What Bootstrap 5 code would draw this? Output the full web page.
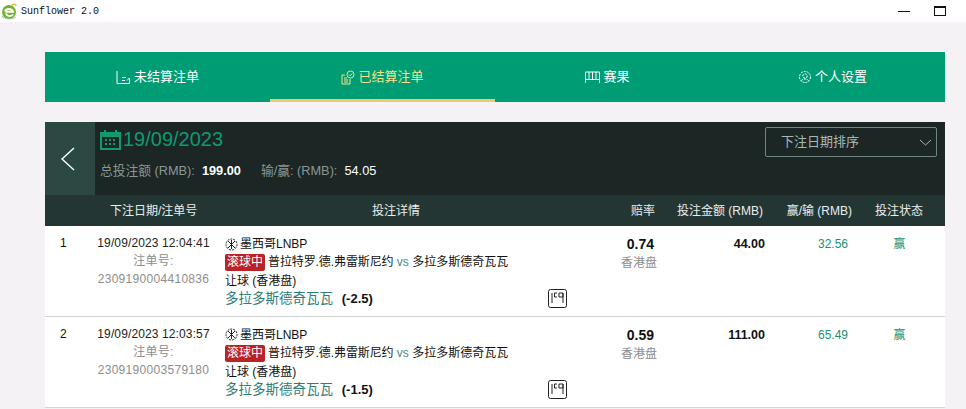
<!DOCTYPE html>
<html lang="zh">
<head>
<meta charset="utf-8">
<title>Sunflower 2.0</title>
<link rel="stylesheet" href="https://cdn.jsdelivr.net/npm/bootstrap@5.3.0/dist/css/bootstrap.min.css">
<style>
html,body{height:100%;overflow:hidden}
body{background:#f5f2f6;font-family:"Liberation Sans","Noto Sans CJK SC",sans-serif;font-size:12px;color:#111}
.win-bar{height:22px;background:#fff;padding-left:1px}
.win-title{font-family:"Liberation Mono",monospace;font-size:10px;color:#111;margin-left:4px}
.win-ctl{margin-right:20px;gap:24px}
.win-min{width:12px;height:1px;background:#111}
.win-max{width:12px;height:10px;border:1px solid #111;border-top-width:2px}
.page-wrap{margin:30px 21px 0 45px}
.tab-bar{background:#009c73;height:50px}
.tab-bar .nav-link{height:50px;display:flex;align-items:center;justify-content:center;gap:3px;color:#fff;font-size:13px;padding:0}
.tab-bar .nav-link.active{color:#f3e28c;border-bottom:3px solid #f1c96a;padding-top:3px}
.panel-top{margin-top:20px;background:#1b2625;height:73px}
.back-box{width:50px;background:#2b4842;padding-right:4px}
.summary{padding:4px 0 0 5px}
.date-big{font-size:20px;line-height:26px;color:#0f9a6f;gap:2px}
.sum-line{margin-top:11px;color:#8b9794;line-height:16px;gap:20px;font-size:12.75px}
.sum-line b,.sum-line em{color:#fff;font-style:normal;margin-left:7px}
.sort-box{width:172px;height:30px;margin:5px 8px 0 0;border:1px solid #6f8782;border-radius:2px;color:#aab6b3;padding:0 4px 0 15px;font-size:13px}
.bet-table{table-layout:fixed;width:900px;margin:0;--bs-table-bg:#fff;--bs-table-color:#111}
.bet-table th{background:#243634;color:#e8eeec;font-weight:400;height:31px;padding:0;vertical-align:middle;border:0}
.bet-table td{height:90px;padding:0;vertical-align:top;border-bottom:1px solid #d4d4d4;background:#fff}
.bet-table tbody tr:nth-child(2) td{height:91px}
.hd-date{padding-left:13px!important}
.hd-stake,.hd-odds{padding-right:2px!important}
.hd-win{padding-right:1px!important;white-space:nowrap}
.hd-status{padding-left:0!important}
.c-idx{padding:8px 0 0 15px!important;line-height:18px}
.c-date{padding-top:8px!important;color:#222}
.c-date div{width:113px;text-align:center;line-height:18px;white-space:nowrap;letter-spacing:.12px}
.c-date .muted-txt{color:#8d8d8d;letter-spacing:.3px}
.c-detail{position:relative;padding-top:9px!important}
.d-line{line-height:18px;height:18px;white-space:nowrap}
.d-league{gap:2px}
.name-home{letter-spacing:-.1px}
.live-tag{background:#b92327;color:#fff;border-radius:2px;padding:1px 2px;margin-right:3px;font-size:12px;line-height:15px;display:inline-block}
.vs-txt{color:#4b8a86}
.spaced{margin-top:1px}
.pick-line{line-height:18px;font-size:13.5px;color:#2f7c78;white-space:nowrap}
.pick-line b{color:#111;margin-left:5px;font-size:13px}
.odds-note{position:absolute;right:0;top:63px}
.c-odds{text-align:right;padding:9px 0 0!important}
.c-odds b{font-size:14px;line-height:19px;display:block;padding-right:3px}
.c-odds span{color:#8d8d8d}
.c-stake{text-align:right;padding-top:9px!important;font-weight:700;line-height:18px;font-size:12.5px}
.c-win{text-align:right;padding:9px 5px 0 0!important;color:#1e9072;line-height:18px}
.c-status{text-align:center;padding:9px 0 0 1px!important;color:#1e9072;line-height:18px}
</style>
</head>
<body>
<div class="win-bar d-flex align-items-center justify-content-between">
  <div class="d-flex align-items-center">
    <svg width="16" height="17" viewBox="0 0 16 17" aria-hidden="true"><circle cx="8" cy="9" r="7" fill="#6fb52c"/><path d="M1 13C3 16 11 17 15 14" stroke="#a7b9a0" fill="none"/><path d="M11 2C13 1 15 1 15 3" stroke="#e9b24a" stroke-width="1.5" fill="none"/><path d="M4 8.5C5 5 11 5 12 8.8H4.5M12 11.5C10 14 6 13.500 4.800 10.500" stroke="#fff" stroke-width="2" fill="none"/></svg>
    <span class="win-title">Sunflower 2.0</span>
  </div>
  <div class="d-flex align-items-center win-ctl"><span class="win-min"></span><span class="win-max"></span></div>
</div>

<div class="page-wrap">
  <ul class="nav nav-justified tab-bar">
    <li class="nav-item"><a class="nav-link" href="#">
      <svg width="15" height="15" viewBox="0 0 15 15" fill="none" stroke="currentColor" aria-hidden="true"><path d="M1 1V13.500H13.500V8M6 7.500H10M6 10.500H9M11 10.500L13.500 8"/></svg>未结算注单</a></li>
    <li class="nav-item"><a class="nav-link active" href="#">
      <svg width="14" height="15" viewBox="0 0 14 15" fill="none" stroke="currentColor" aria-hidden="true"><circle cx="9.500" cy="4.500" r="3.500"/><path d="M8 4.500L9.200 5.800 11.200 3.500M4 5H1V14H9V9M3 8H6M3 10H7M3 12H7"/></svg>已结算注单</a></li>
    <li class="nav-item"><a class="nav-link" href="#">
      <svg width="15" height="13" viewBox="0 0 15 13" fill="none" stroke="currentColor" aria-hidden="true"><path d="M.5 12V1H14.500V12M4 1V8M7.500 1V8M11 1V8M.5 8.500H14.500"/></svg>赛果</a></li>
    <li class="nav-item"><a class="nav-link" href="#">
      <svg width="14" height="14" viewBox="0 0 14 14" fill="none" stroke="currentColor" stroke-dasharray="2 1" aria-hidden="true"><circle cx="7" cy="7" r="5.500"/><circle cx="7" cy="6" r="2.200"/><path d="M3.500 10.500C5 8.500 9 8.500 10.500 10.500"/></svg>个人设置</a></li>
  </ul>

  <div class="panel-top d-flex">
    <div class="back-box d-flex align-items-center justify-content-center">
      <svg width="16" height="26" viewBox="0 0 16 26" fill="none" stroke="#fff" stroke-width="1.400" aria-hidden="true"><path d="M14 2L2 13L14 24"/></svg>
    </div>
    <div class="summary flex-grow-1">
      <div class="date-big d-flex align-items-center">
        <svg width="21" height="21" viewBox="0 0 21 21" fill="#0f9a6f" aria-hidden="true"><path d="M0 3H4V1H6V3H15V1H17V3H21V21H0ZM2 8V19H19V8Z"/><path d="M5 10h2v2H5zM9 10h2v2H9zM13 10h2v2h-2zM5 14h2v2H5zM9 14h2v2H9zM13 14h2v2h-2z"/></svg>
        <span>19/09/2023</span>
      </div>
      <div class="sum-line d-flex">
        <span>总投注额 (RMB):<b>199.00</b></span>
        <span>输/赢: (RMB):<em>54.05</em></span>
      </div>
    </div>
    <div class="sort-box d-flex align-items-center justify-content-between">
      <span>下注日期排序</span>
      <svg width="13" height="7" viewBox="0 0 13 7" fill="none" stroke="#aab6b3" aria-hidden="true"><path d="M1 1L6.500 6L12 1"/></svg>
    </div>
  </div>

  <table class="table bet-table">
    <colgroup><col style="width:52px"><col style="width:128px"><col style="width:342px"><col style="width:90px"><col style="width:108px"><col style="width:88px"><col style="width:92px"></colgroup>
    <thead>
      <tr>
        <th></th>
        <th class="hd-date">下注日期/注单号</th>
        <th class="text-center">投注详情</th>
        <th class="text-end hd-odds">赔率</th>
        <th class="text-end hd-stake">投注金额 (RMB)</th>
        <th class="text-end hd-win">赢/输 (RMB)</th>
        <th class="text-center hd-status">投注状态</th>
      </tr>
    </thead>
    <tbody>
      <tr>
        <td class="c-idx">1</td>
        <td class="c-date"><div>19/09/2023 12:04:41</div><div class="muted-txt">注单号:</div><div class="muted-txt">2309190004410836</div></td>
        <td class="c-detail">
          <div class="d-line d-league d-flex align-items-center">
            <svg width="13" height="13" viewBox="0 0 13 13" fill="none" stroke="#222" aria-hidden="true"><circle cx="6.500" cy="6.500" r="5.500" stroke-dasharray="2 1"/><path d="M3 3L10 10M10 3L3 10M6.500 2V11"/></svg><span>墨西哥LNBP</span>
          </div>
          <div class="d-line"><span class="live-tag">滚球中</span><span class="name-home">普拉特罗.德.弗雷斯尼约</span> <span class="vs-txt">vs</span> 多拉多斯德奇瓦瓦</div>
          <div class="d-line spaced">让球 (香港盘)</div>
          <div class="pick-line">多拉多斯德奇瓦瓦 <b>(-2.5)</b></div>
          <svg class="odds-note" width="19" height="19" viewBox="0 0 19 19" fill="none" stroke="#222" aria-hidden="true"><rect x=".5" y=".5" width="18" height="18" rx="2"/><path d="M4 4V14M6.500 4H9M6.500 4V8H9M11 4H15V8H11ZM15 4V14"/></svg>
        </td>
        <td class="c-odds"><b>0.74</b><span>香港盘</span></td>
        <td class="c-stake">44.00</td>
        <td class="c-win">32.56</td>
        <td class="c-status">赢</td>
      </tr>
      <tr>
        <td class="c-idx">2</td>
        <td class="c-date"><div>19/09/2023 12:03:57</div><div class="muted-txt">注单号:</div><div class="muted-txt">2309190003579180</div></td>
        <td class="c-detail">
          <div class="d-line d-league d-flex align-items-center">
            <svg width="13" height="13" viewBox="0 0 13 13" fill="none" stroke="#222" aria-hidden="true"><circle cx="6.500" cy="6.500" r="5.500" stroke-dasharray="2 1"/><path d="M3 3L10 10M10 3L3 10M6.500 2V11"/></svg><span>墨西哥LNBP</span>
          </div>
          <div class="d-line"><span class="live-tag">滚球中</span><span class="name-home">普拉特罗.德.弗雷斯尼约</span> <span class="vs-txt">vs</span> 多拉多斯德奇瓦瓦</div>
          <div class="d-line spaced">让球 (香港盘)</div>
          <div class="pick-line">多拉多斯德奇瓦瓦 <b>(-1.5)</b></div>
          <svg class="odds-note" width="19" height="19" viewBox="0 0 19 19" fill="none" stroke="#222" aria-hidden="true"><rect x=".5" y=".5" width="18" height="18" rx="2"/><path d="M4 4V14M6.500 4H9M6.500 4V8H9M11 4H15V8H11ZM15 4V14"/></svg>
        </td>
        <td class="c-odds"><b>0.59</b><span>香港盘</span></td>
        <td class="c-stake">111.00</td>
        <td class="c-win">65.49</td>
        <td class="c-status">赢</td>
      </tr>
    </tbody>
  </table>
</div>
<script src="https://cdn.jsdelivr.net/npm/bootstrap@5.3.0/dist/js/bootstrap.bundle.min.js"></script>
</body>
</html>
